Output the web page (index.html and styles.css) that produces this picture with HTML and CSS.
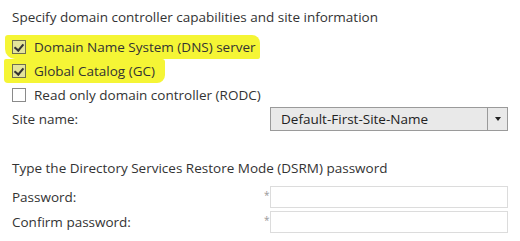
FILE: index.html
```html
<!DOCTYPE html>
<html>
<head>
    <title>Domain Controller Options</title>
    <link rel="stylesheet" href="styles.css">
</head>
<body>
    <div class="page">
        <div class="heading">Specify domain controller capabilities and site information</div>

        <div class="options">
            <label class="option">
                <span class="mark mark-wide">
                    <span class="box checked"></span>
                    <span>Domain Name System (DNS) server</span>
                </span>
            </label>
            <label class="option">
                <span class="mark mark-short">
                    <span class="box checked"></span>
                    <span>Global Catalog (GC)</span>
                </span>
            </label>
            <label class="option">
                <span class="box"></span>
                <span>Read only domain controller (RODC)</span>
            </label>
        </div>

        <div class="field site-row">
            <span class="label">Site name:</span>
            <div class="select">
                <span class="select-text">Default-First-Site-Name</span>
                <span class="select-arrow"></span>
            </div>
        </div>

        <div class="heading dsrm">Type the Directory Services Restore Mode (DSRM) password</div>

        <div class="field">
            <span class="label">Password:</span>
            <span class="star">*</span>
            <div class="input"></div>
        </div>
        <div class="field">
            <span class="label">Confirm password:</span>
            <span class="star">*</span>
            <div class="input"></div>
        </div>
    </div>
</body>
</html>
```

FILE: styles.css
```css
body {
    font-family: "Open Sans", "Noto Sans", sans-serif;
    font-size: 13.5px;
    color: #333;
    background-color: #fff;
    margin: 0;
}

.page {
    padding: 7px 12px 0 12px;
    display: flex;
    flex-direction: column;
}

.heading {
    height: 20px;
    line-height: 20px;
}

.options {
    margin-top: 8px;
    display: flex;
    flex-direction: column;
}

.option {
    display: flex;
    align-items: center;
    gap: 8px;
    height: 24px;
}

.mark {
    display: flex;
    align-items: center;
    gap: 8px;
    background-color: #f5f535;
    margin-left: -7px;
    padding-left: 7px;
    box-sizing: border-box;
}

.mark-wide {
    height: 24px;
    padding-right: 4px;
    border-radius: 3px 8px 2px 10px;
}

.mark-short {
    height: 24px;
    margin-left: -8px;
    padding-left: 8px;
    padding-right: 10px;
    border-radius: 2px 3px 8px 4px;
}

.box {
    width: 12px;
    height: 12px;
    border: 1px solid #8a8a8a;
    background-color: #fff;
    position: relative;
    flex-shrink: 0;
}

.box.checked {
    background-color: #e4e49a;
    border-color: #6e6e50;
}

.box.checked::after {
    content: "";
    position: absolute;
    left: 3px;
    top: 1px;
    width: 4px;
    height: 7px;
    border-right: 2px solid #333;
    border-bottom: 2px solid #333;
    transform: rotate(40deg);
}

.field {
    display: flex;
    align-items: center;
    height: 25px;
}

.site-row {
    height: 24px;
}

.label {
    width: 252px;
    flex-shrink: 0;
}

.select {
    width: 236px;
    height: 22px;
    border: 1px solid #9a9a9a;
    background-color: #e9e9e9;
    display: flex;
    align-items: center;
    margin-left: 6px;
}

.select-text {
    flex: 1;
    padding-left: 10px;
    color: #222;
}

.select-arrow {
    width: 19px;
    height: 100%;
    border-left: 1px solid #9a9a9a;
    display: flex;
    align-items: center;
    justify-content: center;
}

.select-arrow::before {
    content: "";
    border-left: 3px solid transparent;
    border-right: 3px solid transparent;
    border-top: 4px solid #222;
}

.dsrm {
    margin-top: 27px;
    margin-bottom: 6px;
}

.star {
    width: 6px;
    color: #999;
    font-size: 10px;
    align-self: flex-start;
    margin-top: 4px;
}

.input {
    width: 236px;
    height: 20px;
    border: 1px solid #dcdcdc;
    background-color: #fff;
}
```
